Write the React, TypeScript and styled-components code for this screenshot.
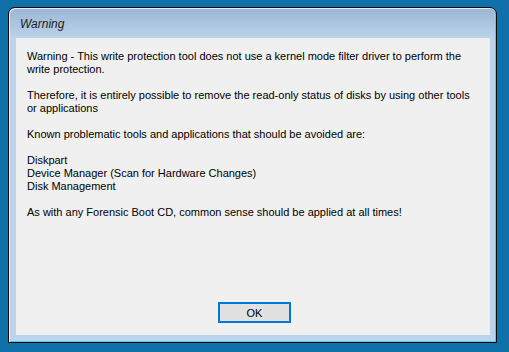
import * as React from 'react';
import styled, { createGlobalStyle } from 'styled-components';

const GlobalStyle = createGlobalStyle`
  html, body {
    margin: 0;
    padding: 0;
    width: 509px;
    height: 352px;
    overflow: hidden;
    background: #1070aa;
    font-family: 'Liberation Sans', Arial, sans-serif;
  }
`;

const Desktop = styled.div`
  width: 509px;
  height: 352px;
  padding: 7px 0 0 8px;
  box-sizing: border-box;
`;

const Window = styled.div`
  width: 489px;
  height: 336px;
  box-sizing: border-box;
  border: 1px solid #0b0b0b;
  border-radius: 7px 7px 0 0;
  background: linear-gradient(to bottom, #9bb5d3 0, #bcd3eb 31px, #bcd3eb 100%);
  box-shadow: inset 1px 1px 0 rgba(255, 255, 255, 0.75), inset -1px -1px 0 #48cfe4;
  display: flex;
  flex-direction: column;
`;

const TitleBar = styled.div`
  height: 30px;
  flex: none;
  padding-left: 11px;
  display: flex;
  align-items: flex-end;
  padding-bottom: 7px;
  box-sizing: border-box;
  font-size: 12px;
  font-style: italic;
  color: #1c1c1c;
  line-height: 14px;
`;

const Panel = styled.div`
  flex: 1;
  margin: 0 6px 7px 7px;
  background: #f0f0f0;
  display: flex;
  flex-direction: column;
  padding: 12px 11px 12px 11px;
  box-sizing: border-box;
`;

const Message = styled.div`
  flex: 1;
  font-size: 11px;
  line-height: 13px;
  color: #000;
`;

const Para = styled.p`
  margin: 0 0 13px 0;
`;

const Footer = styled.div`
  display: flex;
  justify-content: center;
  padding-left: 3px;
`;

const Button = styled.button`
  width: 73px;
  height: 21px;
  box-sizing: border-box;
  border: 2px solid #0078d7;
  background: #e1e1e1;
  font-family: 'Liberation Sans', Arial, sans-serif;
  font-size: 11px;
  color: #000;
  padding: 0;
  cursor: pointer;
`;

const App: React.FC = () => (
  <>
    <GlobalStyle />
    <Desktop>
      <Window>
        <TitleBar>Warning</TitleBar>
        <Panel>
          <Message>
            <Para>
              Warning - This write protection tool does not use a kernel mode filter driver to perform the
              <br />
              write protection.
            </Para>
            <Para>
              Therefore, it is entirely possible to remove the read-only status of disks by using other tools
              <br />
              or applications
            </Para>
            <Para>Known problematic tools and applications that should be avoided are:</Para>
            <Para>
              Diskpart
              <br />
              Device Manager (Scan for Hardware Changes)
              <br />
              Disk Management
            </Para>
            <Para>As with any Forensic Boot CD, common sense should be applied at all times!</Para>
          </Message>
          <Footer>
            <Button>OK</Button>
          </Footer>
        </Panel>
      </Window>
    </Desktop>
  </>
);

export default App;
